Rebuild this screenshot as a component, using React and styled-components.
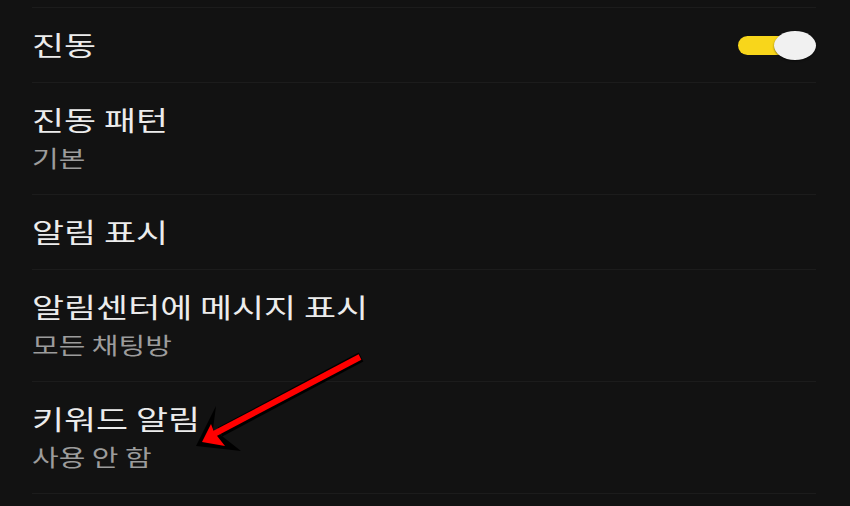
import React from 'react'
import styled, { createGlobalStyle } from 'styled-components'

const GlobalStyle = createGlobalStyle`
  html, body {
    margin: 0;
    padding: 0;
    background: #121212;
  }
  body {
    font-family: "Noto Sans CJK KR", "Noto Sans", sans-serif;
  }
`

const Page = styled.div`
  position: relative;
  width: 850px;
  height: 506px;
  overflow: hidden;
  background: #121212;
  padding: 7px 34px 0 32px;
  box-sizing: border-box;
`

const List = styled.div`
  display: flex;
  flex-direction: column;
  border-bottom: 1px solid #1c1c1c;
`

const Row = styled.div`
  display: flex;
  align-items: flex-start;
  justify-content: space-between;
  padding: 19px 0 20px;
  border-top: 1px solid #1c1c1c;
`

const Texts = styled.div`
  display: flex;
  flex-direction: column;
`

const Title = styled.div`
  color: #ececec;
  font-size: 27px;
  line-height: 35px;
  white-space: nowrap;
  transform: scaleX(1.29);
  transform-origin: left center;
`

const Sub = styled.div`
  margin-top: 4px;
  color: #9c9c9c;
  font-size: 23px;
  line-height: 33px;
  white-space: nowrap;
  transform: scaleX(1.26);
  transform-origin: left center;
`

const Toggle = styled.div`
  position: relative;
  width: 78px;
  height: 29px;
  margin-top: 4px;
`

const Track = styled.div`
  position: absolute;
  left: 0;
  top: 5px;
  width: 66px;
  height: 19px;
  border-radius: 10px;
  background: ${p => (p.on ? '#f8d61b' : '#555')};
`

const Thumb = styled.div`
  position: absolute;
  top: 0;
  ${p => (p.on ? 'right: 0;' : 'left: 0;')}
  width: 42px;
  height: 29px;
  border-radius: 50%;
  background: #f1f1f1;
  box-shadow: 0 1px 2px rgba(0, 0, 0, 0.5);
`

const ArrowLayer = styled.svg`
  position: absolute;
  left: 0;
  top: 0;
  pointer-events: none;
`

const items = [
  { title: '진동', toggle: true },
  { title: '진동 패턴', sub: '기본' },
  { title: '알림 표시' },
  { title: '알림센터에 메시지 표시', sub: '모든 채팅방' },
  { title: '키워드 알림', sub: '사용 안 함' },
]

function Switch({ on }) {
  return (
    <Toggle>
      <Track on={on} />
      <Thumb on={on} />
    </Toggle>
  )
}

export default function App() {
  return (
    <>
      <GlobalStyle />
      <Page>
        <List>
          {items.map(item => (
            <Row key={item.title}>
              <Texts>
                <Title>{item.title}</Title>
                {item.sub && <Sub>{item.sub}</Sub>}
              </Texts>
              {item.toggle && <Switch on />}
            </Row>
          ))}
        </List>
        <ArrowLayer width="850" height="506" viewBox="0 0 850 506">
          <g strokeLinejoin="miter" strokeLinecap="butt">
            <line x1="361" y1="357" x2="220" y2="432" stroke="#000" strokeWidth="10" />
            <polygon points="196,446 216,406 213,429 241,451" fill="#000" />
            <polygon points="202,442 211,424 214,432 225,446" fill="#ff0000" />
            <line x1="360" y1="357" x2="212" y2="435" stroke="#ff0000" strokeWidth="6" />
          </g>
        </ArrowLayer>
      </Page>
    </>
  )
}
